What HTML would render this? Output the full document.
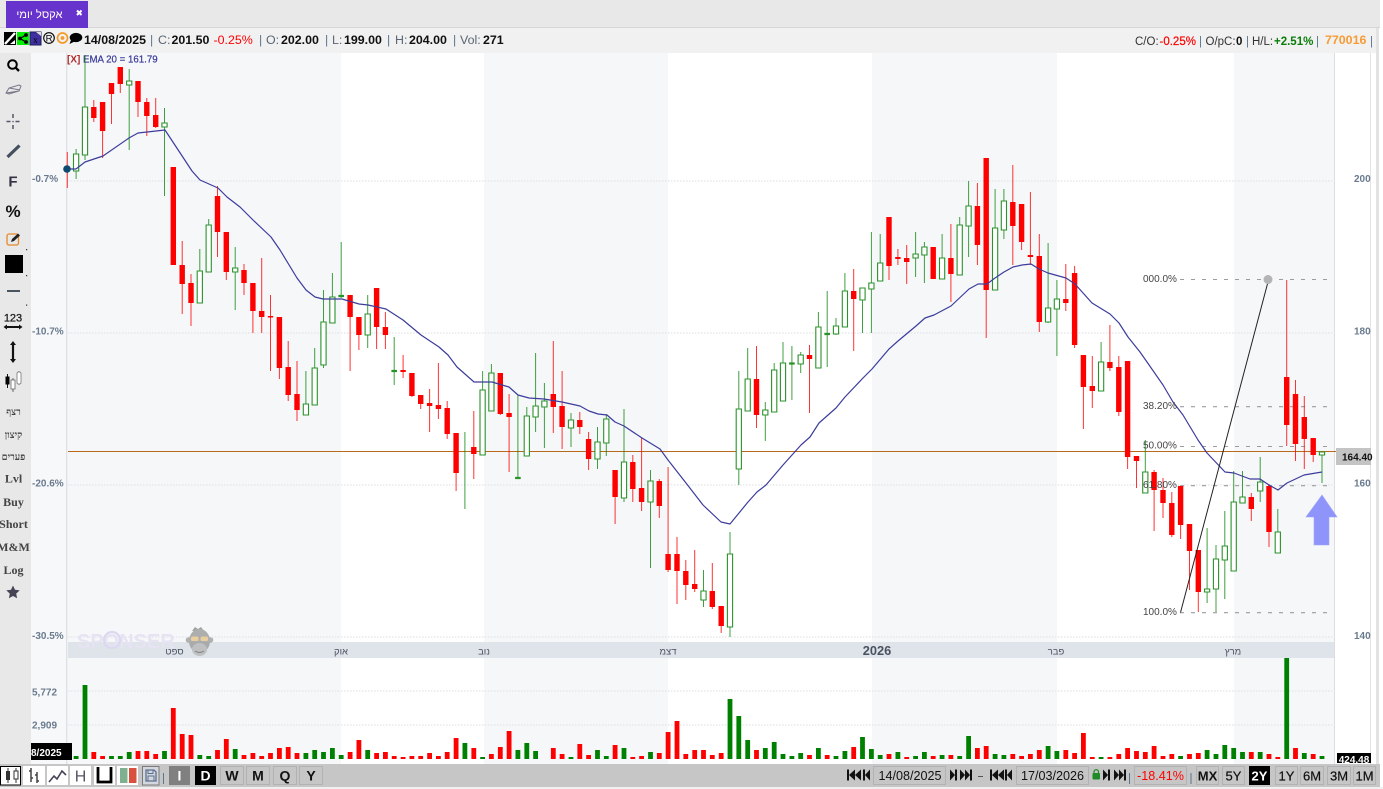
<!DOCTYPE html>
<html><head><meta charset="utf-8"><title>Chart</title>
<style>
html,body{margin:0;padding:0;background:#fff;width:1383px;height:789px;overflow:hidden}
svg{display:block;font-family:"Liberation Sans","Noto Sans CJK JP",sans-serif}
.b{font-weight:700}
.lab{fill:#5a6675;font-size:12.4px}
.val{fill:#111;font-size:12.4px;font-weight:700}
.sep{fill:#5a7590;font-size:12.4px}
.ax{fill:#6a7a8e;font-size:10px;font-weight:700}
.mon{fill:#4a5260;font-size:9.5px;text-anchor:middle}
.fib{fill:#444;font-size:10px}
.side{fill:#444;font-family:"Liberation Serif","Noto Serif CJK SC",serif;font-weight:700;font-size:12px;text-anchor:middle}
.sideh{fill:#444;font-family:"Liberation Serif","Noto Serif CJK SC",serif;font-weight:700;font-size:9.5px;text-anchor:middle}
.tb{font-size:14px;font-weight:700;text-anchor:middle;fill:#111}
.rb{font-size:13px;font-weight:700;text-anchor:middle;fill:#111}
.dt{font-size:12.6px;text-anchor:middle;fill:#111}
.hr{font-size:11.5px;fill:#333}
</style></head><body>
<svg width="1383" height="789" viewBox="0 0 1383 789" xmlns="http://www.w3.org/2000/svg">
<!-- frame -->
<rect width="1383" height="789" fill="#fff"/>
<rect width="1380" height="28" fill="#e8e8e8"/>
<rect y="27" width="1380" height="1" fill="#d6d6d6"/>
<rect y="28" width="1377" height="25" fill="#f1f1f1"/>
<rect y="53" width="31" height="711" fill="#e8e8e8"/>
<rect x="31" y="53" width="36" height="711" fill="#f7f8fa"/>
<rect x="66" y="53" width="1.5" height="711" fill="#dfe1e4"/>
<!-- bands -->
<g fill="#f6f7f9">
<rect x="68" y="53" width="273" height="711"/>
<rect x="484" y="53" width="184" height="711"/>
<rect x="872" y="53" width="185" height="711"/>
<rect x="1234" y="53" width="100" height="711"/>
</g>
<rect x="1334" y="53" width="1" height="711" fill="#dcdee1"/>
<rect x="1370" y="53" width="1" height="711" fill="#e2e2e2"/>
<rect x="1376" y="28" width="3" height="736" fill="#e2e2e2"/>
<!-- grid -->
<g stroke="#e2e4e8" stroke-width="1.2" stroke-dasharray="1.5 1.5" fill="none">
<path d="M68 181H1334M68 333H1334M68 485H1334M68 637H1334M68 691H1334M68 725H1334"/>
</g>
<!-- tab -->
<rect x="6" y="1" width="82" height="27" fill="#6633cc"/>
<text x="39.500" y="18" fill="#fff" font-size="11.2" text-anchor="middle" direction="rtl">אקסל יומי</text>
<path d="M77 10.500l4.500 4.500M81.500 10.500l-4.500 4.500" stroke="#fff" stroke-width="2"/>
<!-- header icons -->
<rect x="4" y="32" width="12" height="13" fill="#000"/>
<path d="M5 44L15 33" stroke="#fff" stroke-width="2.400"/><path d="M10 44h5v-4z" fill="#fff"/>
<rect x="17" y="32" width="12" height="13" fill="#00f000"/>
<path d="M20 38.500L26 35M20 38.500L26 42" stroke="#000" stroke-width="1.300"/><circle cx="20" cy="38.500" r="1.900"/><circle cx="26" cy="35" r="1.900"/><circle cx="26" cy="42" r="1.900"/>
<rect x="30" y="32" width="11" height="13" fill="#3f2f9f" stroke="#1c1c5c"/><text x="35.500" y="43" font-size="9" fill="#000" text-anchor="middle" font-family="Liberation Serif">x</text><path d="M36 32l5 4v-4z" fill="#dddddd"/>
<circle cx="49" cy="38" r="5.300" fill="none" stroke="#000" stroke-width="1.100"/><text x="49" y="41.500" font-size="9.500" text-anchor="middle" fill="#000">R</text>
<circle cx="62.500" cy="38" r="5" fill="none" stroke="#f59a2a" stroke-width="1.700"/><circle cx="62.500" cy="38" r="1.900" fill="#f59a2a"/>
<ellipse cx="76" cy="37.500" rx="6.300" ry="4.600" fill="#000"/><path d="M71 40l-1.500 4 5-2.500z" fill="#000"/>
<!-- header text -->
<text x="84" y="44" class="val" fill="#111">14/08/2025</text>
<text x="150" y="44" class="sep">|</text><text x="158" y="44" class="lab">C:</text><text x="171.500" y="44" class="val">201.50</text>
<text x="213.500" y="44" font-size="12.400" fill="#f00">-0.25%</text>
<text x="259" y="44" class="sep">|</text><text x="266" y="44" class="lab">O:</text><text x="281" y="44" class="val">202.00</text>
<text x="325" y="44" class="sep">|</text><text x="332" y="44" class="lab">L:</text><text x="344" y="44" class="val">199.00</text>
<text x="387" y="44" class="sep">|</text><text x="395" y="44" class="lab">H:</text><text x="409" y="44" class="val">204.00</text>
<text x="453" y="44" class="sep">|</text><text x="460" y="44" class="lab">Vol:</text><text x="483" y="44" class="val">271</text>
<text x="1135" y="45" class="hr">C/O:</text><text x="1159.500" y="45" font-size="11.500" fill="#f00" style="stroke:#f00;stroke-width:.2">-0.25%</text>
<text x="1199" y="45" class="hr" style="fill:#5a7590">|</text>
<text x="1205.500" y="45" class="hr">O/pC:</text><text x="1236" y="45" font-size="11.500" font-weight="700" fill="#111">0</text>
<text x="1246" y="45" class="hr" style="fill:#5a7590">|</text>
<text x="1252" y="45" class="hr">H/L:</text><text x="1274" y="45" font-size="11.500" font-weight="700" fill="#0a7d0a">+2.51%</text>
<text x="1316" y="45" class="hr" style="fill:#5a7590">|</text>
<text x="1325" y="44" font-size="12.400" font-weight="700" fill="#f89b35">770016</text>
<text x="1370" y="45" class="hr" style="fill:#5a7590">|</text>
<!-- axis labels -->
<g class="ax">
<text x="32" y="182">-0.7%</text><text x="32" y="334.500">-10.7%</text><text x="32" y="486.500">-20.6%</text><text x="32" y="639">-30.5%</text>
<text x="1354" y="182">200</text><text x="1354" y="334.500">180</text><text x="1354" y="486.500">160</text><text x="1354" y="639">140</text>
<text x="32" y="695.500">5,772</text><text x="32" y="728.500">2,909</text>
</g>
<!-- legend -->
<text x="67" y="62.500" font-size="10" font-weight="700" fill="#b02a2a">[X]</text>
<text x="83" y="62.500" font-size="9.700" fill="#3a3a9a" style="stroke:#3a3a9a;stroke-width:.2">EMA 20 = 161.79</text>
<!-- time axis -->
<rect x="68" y="642" width="1266" height="16" fill="#dfe3ea"/>
<!-- watermark -->
<text x="77" y="648" font-size="20" font-weight="700" fill="#e6e3f3">SPONSER</text>
<circle cx="112" cy="640" r="8" fill="none" stroke="#dcd8f0" stroke-width="2.200"/>
<g opacity=".8">
<path d="M192 631l3-4 3 2 3-2 3 4z" fill="#8e8e8e"/>
<circle cx="188.500" cy="640" r="2.800" fill="#a0a0a0"/><circle cx="210.500" cy="640" r="2.800" fill="#a0a0a0"/>
<ellipse cx="199.500" cy="641" rx="10.500" ry="12" fill="#9c9c9c"/>
<rect x="191" y="636.500" width="7.500" height="4.500" rx="1.500" fill="#e6c48a"/><rect x="200.500" y="636.500" width="7.500" height="4.500" rx="1.500" fill="#e6c48a"/>
<ellipse cx="199.500" cy="649.500" rx="7.500" ry="6.500" fill="#b8b8b8"/>
<path d="M195 651q4.500 3 9 0" fill="none" stroke="#666"/>
</g>
<g class="mon"><text x="174.500" y="654.500">ספט</text><text x="341" y="654.500">אוק</text><text x="484" y="654.500">נוב</text><text x="668" y="654.500">דצמ</text><text x="877" y="655" style="font-size:12.800px;font-weight:700">2026</text><text x="1056" y="654.500">פבר</text><text x="1233" y="654.500">מרץ</text></g>
<!-- price line -->
<path d="M68 451.500H1336" stroke="#b86a1c" stroke-width="1"/>
<!-- fib lines -->
<path d="M1180 279.500H1334M1180 406.700H1334M1180 446.500H1334M1180 485.700H1334M1180 612.700H1334" stroke="#9c9c9c" stroke-width="1.100" stroke-dasharray="4 7" fill="none"/>
<!-- red wicks -->
<path fill="none" stroke="#f00" stroke-opacity=".8" stroke-width="1" d="M67.3 152V188M93.8 100V122M102.6 102V158M111.5 83V124M120.3 67V93M138 81V117M146.8 98V136M155.7 98V128M182.2 241V314M191 274V326M217.5 186V257M226.300 232V280M244 264V295M252.900 283V333M261.700 258V333M270.500 295V371M279.400 317V379M288.200 341V401M297 361V421M350.100 295V371M358.900 317V350M376.600 288V349M385.400 312V349M403.100 355V378M411.900 373V397M420.700 395V409M429.600 389V432M438.400 363V419M447.200 401V439M456.100 433V491M473.800 411V479M500.300 373V415M509.100 394V472M553.300 341V433M562.100 371V449M579.800 412V434M588.600 432V470M615.100 470V524M632.800 455V502M641.600 438V511M659.300 479V518M668.100 467V572M677 537V604M685.800 560V600M694.700 550V592M712.300 563V609M721.200 606V633M756.500 346V428M809.500 345V413M853.700 269V351M889 217V280M897.900 249V265M906.700 245V284M933.200 247V279M950.900 224V302M977.400 183V265M986.200 158V338M1012.800 165V265M1021.600 204V250M1030.400 192V265M1039.300 234V332M1065.800 264V311M1074.600 266V348M1083.400 355V429M1092.300 356V408M1109.900 325V371M1118.800 356V416M1127.600 361V469M1136.500 456V488M1154.100 470V531M1163 478V518M1171.800 492V537M1180.600 486V539M1189.500 524V590M1198.300 550V612M1251.300 493V521M1269 484V547M1286.700 280V446M1295.500 380V461M1304.300 396V469M1313.200 438V462"/>
<!-- green wicks -->
<path fill="none" stroke="#008000" stroke-opacity=".75" stroke-width="1" d="M76.100 149V179M85 55V160M129.200 69V150M164.500 108V196M199.800 249V303M208.700 219V272M235.200 247V310M305.900 371V415M314.700 348V405M323.500 290V368M332.400 273V323M341.200 242V298M367.700 295V348M394.200 337V385M464.900 432V509M482.600 371V455M491.400 364V411M517.900 395V478M526.800 407V456M535.600 353V432M544.400 383V448M571 413V447M597.500 427V469M606.300 414V456M624 409V502M650.500 470V568M703.500 570V607M730 532V637M738.800 371V485M747.700 348V411M765.300 402V441M774.200 363V412M783 342V401M791.900 346V400M800.700 352V373M818.400 312V368M827.200 291V367M836 318V335M844.900 273V327M862.500 288V333M871.400 232V333M880.200 234V281M915.600 232V277M924.400 242V283M942.100 234V279M959.700 217V275M968.600 181V257M995.100 189V290M1003.900 189V239M1048.100 243V323M1056.900 280V356M1101.100 342V391M1145.300 440V493M1207.100 528V603M1216 545V612M1224.800 511V599M1233.700 471V571M1242.500 471V503M1260.200 457V502M1277.800 509V553M1322 452V483"/>
<!-- red bodies -->
<path fill="none" stroke="#f00" stroke-width="5.400" d="M93.800 107V118M102.600 102V131M111.500 83V94M120.300 67V84M138 81V102M146.800 102V116M155.700 115V127M173.300 167V265M182.200 265V284M191 283V303M217.500 196V232M226.300 232V272M244 270V283M252.900 283V311M261.700 311V317M270.500 316V317.500M279.400 317V368M288.200 367V395M297 394V410M350.100 295V317M358.900 317V335M376.600 288V327M385.400 327V335M403.100 370V372M411.900 373V396M420.700 395V404M429.600 403V406M438.400 405V409M447.200 408V434M456.100 433V473M473.800 447V454M500.300 373V414M509.100 413V417M553.300 394V407M562.100 406V427M579.800 420V427M588.600 439V459M615.100 470V497M632.800 462V489M641.600 488V502M659.300 481V506M668.100 554V570M677 554V571M685.800 571V585M694.700 584V589M712.300 591V607M721.200 606V626M756.500 379V415M809.500 355V359M853.700 291V299M889 217V266M897.900 257V259M906.700 258V262M933.200 247V279M950.900 258V274M977.400 206V245M986.200 158V290M1012.800 202V226M1021.600 204V242M1030.400 255V257M1039.300 256V322M1065.800 299V303M1074.600 273V345M1083.400 355V387M1092.300 386V391M1109.900 362V368M1118.800 367V412M1127.600 361V457M1136.500 456V461M1154.100 472V490M1163 490V503M1171.800 503V535M1180.600 486V525M1189.500 524V551M1198.300 550V592M1251.300 497V509M1269 486V532M1286.700 377V425M1295.500 394V444M1304.300 417V439M1313.200 438V455"/>
<!-- green bodies -->
<path fill="#fff" stroke="#2a922a" stroke-width="1.100" d="M73.500 154h5.200v17h-5.200zM82.400 107h5.200v48h-5.200zM126.600 81h5.200v4h-5.200zM161.900 123h5.200v4h-5.200zM197.200 271h5.200v32h-5.200zM206.100 225h5.200v47h-5.200zM232.600 268h5.200v4h-5.200zM303.300 404h5.200v11h-5.200zM312.100 368h5.200v37h-5.200zM320.900 322h5.200v43h-5.200zM329.800 297h5.200v26h-5.200zM365.100 314h5.200v21h-5.200zM480 390h5.200v65h-5.200zM488.800 373h5.200v38h-5.200zM524.200 416h5.200v40h-5.200zM533 406h5.200v11h-5.200zM541.800 401h5.200v6h-5.200zM568.400 420h5.200v8h-5.200zM594.900 442h5.200v17h-5.200zM603.700 419h5.200v24h-5.200zM621.400 462h5.200v36h-5.200zM647.900 481h5.200v21h-5.200zM700.900 591h5.200v9h-5.200zM727.400 554h5.200v73h-5.200zM736.200 409h5.200v60h-5.200zM745.100 379h5.200v32h-5.200zM762.700 410h5.200v5h-5.200zM771.600 370h5.200v42h-5.200zM780.400 363h5.200v38h-5.200zM798.100 355h5.200v9h-5.200zM815.800 327h5.200v41h-5.200zM833.400 326h5.200v8h-5.200zM842.300 291h5.200v36h-5.200zM859.900 288h5.200v12h-5.200zM868.800 283h5.200v6h-5.200zM877.600 263h5.200v18h-5.200zM913 254h5.200v4h-5.200zM921.800 247h5.200v8h-5.200zM939.500 258h5.200v21h-5.200zM957.100 225h5.200v50h-5.200zM966 206h5.200v20h-5.200zM992.500 228h5.200v62h-5.200zM1001.300 201h5.200v29h-5.200zM1045.500 308h5.200v14h-5.200zM1054.300 299h5.200v10h-5.200zM1098.500 362h5.200v29h-5.200zM1142.700 472h5.200v21h-5.200zM1204.500 589h5.200v3h-5.200zM1213.400 559h5.200v30h-5.200zM1222.200 546h5.200v14h-5.200zM1231.100 502h5.200v69h-5.200zM1239.900 497h5.200v6h-5.200zM1257.600 482h5.200v9h-5.200zM1275.200 532h5.200v21h-5.200zM1319.400 452h5.200v3h-5.200z"/>
<!-- filled small green -->
<path fill="none" stroke="#2a922a" stroke-width="2.200" d="M338.400 296h5.600M391.400 371h5.600M515.100 478h5.600M789.100 363.500h5.600M824.400 334h5.600"/>
<!-- EMA -->
<path fill="none" stroke="#3c3c9c" stroke-width="1.200" stroke-linejoin="round" d="M67 169L76 169L85 162L103 156L129 138L138 133L147 132L165 130L192 171L200 180L218 188L227 197L240 207L253 220L271 237L280 250L297 278L306 290L315 297L323 299L342 299L359 304L368 305L386 309L403 320L421 335L439 347L448 355L457 367L474 382L492 382L509 387L518 395L529 398L544 399L562 402L580 406L589 411L598 414L607 415L615 422L624 426L642 438L660 449L668 460L686 483L703 505L721 522L730 524L748 502L757 492L766 485L783 465L801 445L810 437L819 423L836 408L845 397L863 378L872 369L889 349L898 341L916 326L925 318L934 315L951 306L969 289L978 284L987 284L995 278L1004 272L1013 267L1022 265L1031 264L1039 269L1048 273L1066 278L1075 284L1092 303L1110 314L1119 323L1128 337L1140 352L1147 362L1163 385L1173 402L1183 415L1198 440L1207 453L1225 472L1234 473L1250 479L1260 479L1269 485L1278 490L1287 483L1304 475L1322 472"/>
<circle cx="67" cy="169" r="3.800" fill="#0c4a70"/>
<!-- fib labels on top of candles -->
<g class="fib"><text x="1143" y="282">000.0%</text><text x="1143" y="409">38.20%</text><text x="1143" y="448.500">50.00%</text><text x="1143" y="488">61.80%</text><text x="1143" y="615">100.0%</text></g>
<!-- fib trend -->
<path d="M1180.500 612.500L1268.500 280" stroke="#222" stroke-width="1" fill="none"/>
<circle cx="1268" cy="279.500" r="4.500" fill="#b4b4b4"/>
<!-- arrow -->
<path d="M1322 495L1337 517H1329V545H1314V517H1306Z" fill="#8e94fa" stroke="#a0a4fb" stroke-width=".6"/>
<!-- price tag -->
<rect x="1336" y="448" width="35" height="17" fill="#c4c4c4"/>
<text x="1342" y="460.500" font-size="10" font-weight="700" fill="#111">164.40</text>
<!-- volume bars -->
<path fill="none" stroke="#f00" stroke-width="4.800" d="M93.800 759v-7M102.600 759v-3M138 759v-8M146.800 759v-8M155.700 759v-5M173.300 759v-51M182.200 759v-25M191 759v-24M217.500 759v-9M226.300 759v-20M244 759v-4M252.900 759v-6M261.700 759v-3M270.500 759v-6M279.400 759v-11M288.200 759v-12M297 759v-6M350.100 759v-7M358.900 759v-19M376.600 759v-6M385.400 759v-7M394.200 759v-3M403.100 759v-2M411.900 759v-3M420.700 759v-3M429.600 759v-6M438.400 759v-3M447.200 759v-7M456.100 759v-21M473.800 759v-11M491.400 759v-5M500.300 759v-12M509.100 759v-28M553.300 759v-11M562.100 759v-5M579.800 759v-15M588.600 759v-4M615.100 759v-14M632.800 759v-2M641.600 759v-3M659.300 759v-6M668.100 759v-27M677 759v-38M685.800 759v-5M694.700 759v-9M703.500 759v-9M712.300 759v-4M721.200 759v-6M756.500 759v-9M809.500 759v-4M827.200 759v-4M853.700 759v-12M889 759v-5M906.700 759v-2M933.200 759v-3M950.900 759v-4M977.400 759v-11M986.200 759v-13M1012.800 759v-5M1021.600 759v-3M1030.400 759v-5M1039.300 759v-9M1065.800 759v-9M1074.600 759v-6M1083.400 759v-26M1092.300 759v-2M1109.900 759v-2M1118.800 759v-5M1127.600 759v-11M1136.500 759v-8M1145.300 759v-7M1154.100 759v-13M1163 759v-3M1171.800 759v-5M1189.500 759v-5M1198.300 759v-6M1251.300 759v-7M1269 759v-5M1277.800 759v-2M1295.500 759v-11M1313.200 759v-5"/>
<path fill="none" stroke="#008000" stroke-width="4.800" d="M76.100 759v-3M85 759v-74M111.500 759v-3M120.300 759v-3M129.200 759v-7M164.500 759v-8M199.800 759v-4M208.700 759v-3M235.200 759v-10M305.900 759v-6M314.700 759v-9M323.500 759v-7M332.400 759v-11M341.200 759v-4M367.700 759v-9M464.900 759v-16M482.600 759v-2M517.900 759v-9M526.800 759v-16M535.600 759v-8M571 759v-2M597.500 759v-9M606.300 759v-3M624 759v-11M650.500 759v-7M730 759v-60M738.800 759v-43M747.700 759v-19M765.300 759v-11M774.200 759v-17M783 759v-5M791.900 759v-3M800.700 759v-6M818.400 759v-11M836 759v-3M844.900 759v-8M862.500 759v-22M871.400 759v-10M880.200 759v-4M897.900 759v-7M915.600 759v-3M924.400 759v-7M942.100 759v-4M959.700 759v-3M968.600 759v-23M995.100 759v-5M1003.900 759v-4M1048.100 759v-13M1056.900 759v-8M1101.100 759v-2M1180.600 759v-3M1207.100 759v-9M1216 759v-5M1224.800 759v-14M1233.700 759v-11M1242.500 759v-7M1260.200 759v-7M1286.700 759v-101M1304.300 759v-6M1322 759v-3"/>
<!-- black date boxes -->
<rect x="31" y="743" width="41" height="17" fill="#000"/>
<text x="31" y="756" font-size="10" font-weight="700" fill="#fff">8/2025</text>
<rect x="1337" y="753" width="34" height="10" fill="#000"/>
<text x="1354" y="763" font-size="10" font-weight="700" fill="#fff" text-anchor="middle">424.48</text>
<!-- sidebar -->
<circle cx="12.500" cy="64.500" r="4.300" fill="none" stroke="#000" stroke-width="2"/><path d="M15.500 67.500L19 71" stroke="#000" stroke-width="2.300"/>
<path d="M6 93l3-5 10-3 2 1-2 5-10 3zM6 93l13-2M9 88l11 2" fill="none" stroke="#778" stroke-width="1"/>
<path d="M6.500 121.500h4M15.500 121.500h4M13 114v4M13 125v4" stroke="#556" stroke-width="1.500"/><circle cx="13" cy="121.500" r=".8" fill="#556"/>
<path d="M7.500 157L19.500 145.500" stroke="#44505e" stroke-width="3.200"/>
<text x="13" y="186.500" font-size="15" font-weight="700" fill="#334" text-anchor="middle">F</text>
<text x="13" y="217" font-size="17" font-weight="700" fill="#111" text-anchor="middle">%</text>
<rect x="7" y="234" width="11.500" height="11" rx="2" fill="none" stroke="#e8882a" stroke-width="1.300"/><path d="M11 242l1-3 6-5.500 2 2-6 5.500z" fill="#222"/>
<rect x="5" y="255" width="18" height="18" fill="#000"/>
<path d="M26 249h1.200v1.200H26zM26 275h1.200v1.200H26zM26 304.500h1.200v1.200H26z" fill="#333"/>
<path d="M7 291h13" stroke="#4a5560" stroke-width="2"/>
<text x="13" y="321.500" font-size="11" fill="#222" text-anchor="middle" style="stroke:#222;stroke-width:.3">123</text>
<path d="M5 327h16" stroke="#111" stroke-width="2"/><path d="M3.500 327l3.500-2.500v5zM22.500 327l-3.500-2.500v5z" fill="#111"/>
<path d="M13 344v17" stroke="#111" stroke-width="2.200"/><path d="M13 341l3 4h-6zM13 363l3-4h-6z" fill="#111"/>
<path d="M7.500 374v14" stroke="#111"/><rect x="5.500" y="376.500" width="4" height="8" fill="#000"/>
<path d="M13 378v14" stroke="#666"/><rect x="11" y="380" width="4" height="9" fill="#fff" stroke="#666" stroke-width=".8"/>
<path d="M19 371v14" stroke="#888"/><rect x="17" y="372" width="4" height="12" rx="1.500" fill="#fff" stroke="#777" stroke-width=".8"/>
<text x="13.500" y="415" class="sideh">רצף</text>
<text x="13.500" y="438" class="sideh">קיצון</text>
<text x="13.500" y="460" class="sideh">פערים</text>
<text x="13.500" y="482.500" class="side">Lvl</text>
<text x="13.500" y="506" class="side">Buy</text>
<text x="13.500" y="528" class="side">Short</text>
<text x="13.500" y="551" class="side">M&amp;M</text>
<text x="13.500" y="574" class="side">Log</text>
<path d="M13 585.500l2 4.300 4.700.6-3.500 3.200.9 4.700-4.100-2.300-4.100 2.300.9-4.700-3.500-3.200 4.700-.6z" fill="#445"/>
<!-- bottom toolbar -->
<rect y="764" width="1380" height="23" fill="#c6c6c6"/>
<rect y="787" width="1383" height="2" fill="#f0f0f0"/>
<!-- chart type buttons -->
<rect x=".5" y="766.500" width="20" height="18.500" fill="#fff" stroke="#000"/>
<path d="M8 768v15M16 768v15" stroke="#333"/><rect x="6" y="771" width="4" height="9" fill="#333"/><rect x="14" y="771" width="4" height="8" fill="#fff" stroke="#333"/>
<rect x="23" y="766" width="22" height="19" fill="#fff"/>
<path d="M31 768v14M29 771h2M31 778h2M37 772v11M35 775h2M37 781h2" stroke="#444" stroke-width="1.500"/>
<rect x="47" y="766" width="21" height="19" fill="#fff"/>
<path d="M49 782l5-6 3 3 5-8 4 4" fill="none" stroke="#445" stroke-width="1.600"/>
<rect x="70" y="766" width="21" height="19" fill="#fff"/>
<text x="80.500" y="781.500" font-size="16" fill="#556" text-anchor="middle">H</text>
<rect x="94" y="766" width="21" height="19" fill="#fff"/>
<path d="M98 767v15h13v-15" fill="none" stroke="#000" stroke-width="2.800"/>
<rect x="117" y="766" width="21" height="19" fill="#fff"/>
<rect x="120" y="768" width="7.500" height="15" fill="#7fb08f"/><rect x="129" y="768" width="7.500" height="15" fill="#d9503f"/>
<rect x="142.500" y="766.500" width="16.500" height="18.500" fill="#d4d8de" stroke="#7a7a7a"/>
<path d="M146 770h8l2 2v9h-10z" fill="none" stroke="#5a7090" stroke-width="1.300"/><path d="M148 770h5v3.500h-5zM148 776h6v5h-6z" fill="none" stroke="#5a7090"/>
<path d="M163.500 773v11" stroke="#5a7590"/>
<rect x="169" y="766" width="21" height="19" fill="#808080"/>
<text x="179.500" y="780.500" class="tb" style="fill:#fff">I</text>
<rect x="195" y="766" width="21" height="19" fill="#000"/>
<text x="205.500" y="780.500" class="tb" style="fill:#fff">D</text>
<g fill="none" stroke="#b2b2b2"><rect x="220.500" y="766.500" width="23" height="18"/><rect x="246.500" y="766.500" width="23" height="18"/><rect x="273.500" y="766.500" width="23" height="18"/><rect x="299.500" y="766.500" width="23" height="18"/></g>
<text x="232" y="780.500" class="tb">W</text><text x="258" y="780.500" class="tb">M</text><text x="285" y="780.500" class="tb">Q</text><text x="311" y="780.500" class="tb">Y</text>
<!-- date nav -->
<path fill="#111" d="M847 769.500h2v11h-2zM849 775l6-5.500v11zM855 775l6-5.500v11zM863 769.500h2v11h-2zM865 775l5-5.500v11z
M957 769.500h-2v11h2zM955 775l-5-5.500v11zM972 769.500h-2v11h2zM970 775l-5-5.500v11zM965 775l-5-5.500v11z
M990 769.500h2v11h-2zM992 775l6-5.500v11zM998 775l6-5.500v11zM1005 769.500h2v11h-2zM1007 775l5-5.500v11z
M1110 769.500h-2v11h2zM1108 775l-5-5.500v11zM1126 769.500h-2v11h2zM1124 775l-5-5.500v11zM1119 775l-5-5.500v11z"/>
<path d="M978 776.500h5" stroke="#555"/>
<g fill="none" stroke="#b2b2b2">
<rect x="873.500" y="766.500" width="72" height="18"/><rect x="1016.500" y="766.500" width="72" height="18"/><rect x="1134.500" y="766.500" width="52" height="18"/>
<rect x="1196.500" y="766.500" width="22" height="18"/><rect x="1222.500" y="766.500" width="22" height="18"/><rect x="1275.500" y="766.500" width="22" height="18"/><rect x="1300.500" y="766.500" width="23" height="18"/><rect x="1327.500" y="766.500" width="23" height="18"/><rect x="1353.500" y="766.500" width="22" height="18"/>
</g>
<text x="910" y="780" class="dt" font-size="13">14/08/2025</text>
<text x="1052.500" y="780" class="dt" font-size="13">17/03/2026</text>
<rect x="1092.500" y="773" width="7.500" height="6.500" rx="1" fill="#1f8a2a"/><path d="M1094 773v-1.500a2.300 2.300 0 0 1 4.500 0v1.500" fill="none" stroke="#1f8a2a" stroke-width="1.200"/>
<path d="M1129.500 773v11M1191 773v11" stroke="#5a7590"/>
<text x="1160.500" y="780" font-size="12.600" fill="#f00" text-anchor="middle">-18.41%</text>
<rect x="1249" y="766" width="21" height="19" fill="#000"/>
<text x="1207.500" y="780.500" class="rb">MX</text>
<text x="1233.500" y="780.500" class="rb" style="font-weight:400;stroke:#111;stroke-width:.2">5Y</text>
<text x="1259.500" y="780.500" class="rb" style="fill:#fff">2Y</text>
<text x="1286.500" y="780.500" class="rb" style="font-weight:400;stroke:#111;stroke-width:.2">1Y</text>
<text x="1312" y="780.500" class="rb" style="font-weight:400;stroke:#111;stroke-width:.2">6M</text>
<text x="1339" y="780.500" class="rb" style="font-weight:400;stroke:#111;stroke-width:.2">3M</text>
<text x="1364.500" y="780.500" class="rb" style="font-weight:400;stroke:#111;stroke-width:.2">1M</text>
</svg>
</body></html>
